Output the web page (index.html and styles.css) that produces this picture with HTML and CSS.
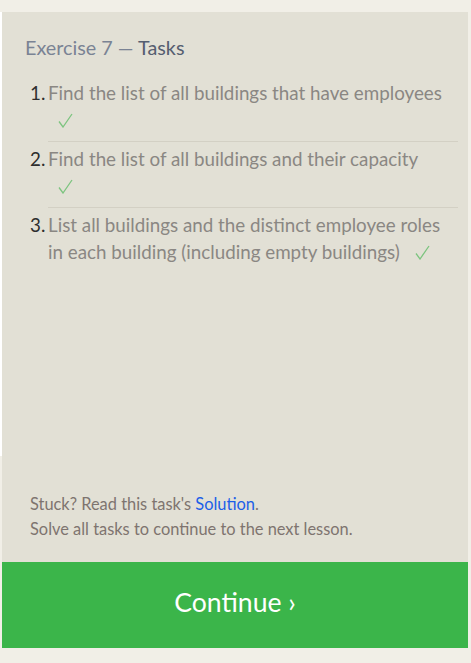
FILE: index.html
```
<!DOCTYPE html>
<html>
<head>
<meta charset="utf-8">
<link rel="stylesheet" href="styles.css">
</head>
<body>
<div class="page">
  <div class="strip"></div>
  <div class="panel">
    <div class="content">
      <h2 class="title">Exercise 7 — <span class="title-strong">Tasks</span></h2>
      <ol class="tasks">
        <li class="task"><span class="num">1.</span><span class="text">Find the list of all buildings that have employees <span class="check"><svg width="15" height="15" viewBox="0 0 15 15"><polyline points="1,8.5 5,14 14,1" fill="none" stroke="#7cc47f" stroke-width="1.3"/></svg></span></span></li>
        <li class="task"><span class="num">2.</span><span class="text">Find the list of all buildings and their capacity <span class="check"><svg width="15" height="15" viewBox="0 0 15 15"><polyline points="1,8.5 5,14 14,1" fill="none" stroke="#7cc47f" stroke-width="1.3"/></svg></span></span></li>
        <li class="task"><span class="num">3.</span><span class="text">List all buildings and the distinct employee roles in each building (including empty buildings) <span class="check"><svg width="15" height="15" viewBox="0 0 15 15"><polyline points="1,8.5 5,14 14,1" fill="none" stroke="#7cc47f" stroke-width="1.3"/></svg></span></span></li>
      </ol>
      <div class="spacer"></div>
      <p class="hint">Stuck? Read this task's <a class="link" href="#">Solution</a>.<br>Solve all tasks to continue to the next lesson.</p>
    </div>
    <div class="continue">Continue ›</div>
  </div>
</div>
</body>
</html>
```
FILE: styles.css
```
html, body {
  margin: 0;
  padding: 0;
  background: #f1efe7;
  font-family: Lato, "Open Sans", sans-serif;
}
.page {
  display: flex;
  align-items: flex-start;
  padding-top: 12px;
}
.strip {
  width: 2px;
  height: 444px;
  background: #ffffff;
}
.panel {
  width: 466px;
  height: 636px;
  background: #e2e0d5;
  display: flex;
  flex-direction: column;
}
.content {
  flex: 1;
  display: flex;
  flex-direction: column;
}
.title {
  margin: 0;
  padding: 22px 0 0 23px;
  font-size: 19.8px;
  font-weight: normal;
  line-height: 26px;
  color: #7a8394;
}
.title-strong {
  color: #555e70;
}
.tasks {
  list-style: none;
  margin: 19px 0 0 0;
  padding: 0 10px 0 28px;
}
.task {
  display: flex;
  position: relative;
  font-size: 18.8px;
  line-height: 27px;
  padding: 4px 0 8px 0;
}
.task:first-child {
  padding-top: 0;
}
.task + .task::before {
  content: "";
  position: absolute;
  top: 0;
  left: 18px;
  right: 0;
  border-top: 1px solid #d3d0c4;
}
.num {
  width: 18px;
  flex: none;
  color: #2e2e2e;
}
.text {
  color: #8a8783;
  padding-right: 13px;
}
.check {
  padding-left: 10px;
}
.check svg {
  vertical-align: -1px;
}
.spacer {
  flex: 1;
}
.hint {
  margin: 0 0 21px 0;
  padding-left: 28px;
  font-size: 16.4px;
  line-height: 25px;
  color: #7e746f;
}
.link {
  color: #1c5fe8;
  text-decoration: none;
}
.continue {
  height: 86px;
  background: #3bb54a;
  color: #ffffff;
  font-size: 26.6px;
  display: flex;
  align-items: center;
  justify-content: center;
  padding-bottom: 6px;
  box-sizing: border-box;
}
```
